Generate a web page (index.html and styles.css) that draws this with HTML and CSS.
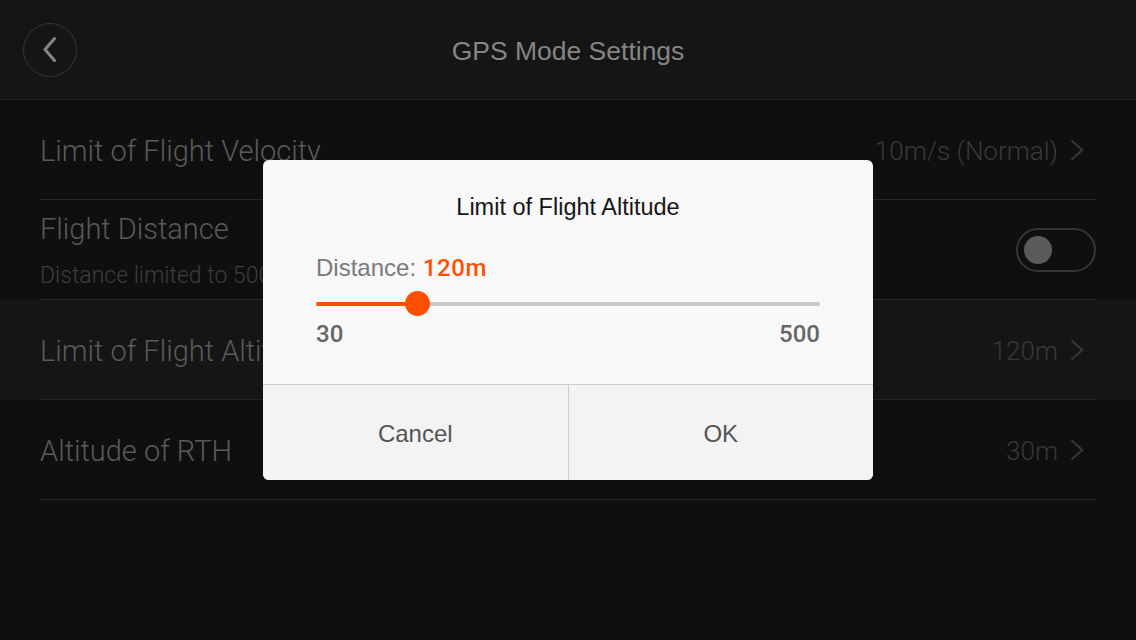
FILE: index.html
```html
<!DOCTYPE html>
<html lang="en">

<head>
    <meta charset="UTF-8">
    <meta name="viewport" content="width=device-width, initial-scale=1.0">
    <title>GPS Mode Settings</title>

    <link rel="stylesheet" href="styles.css">
</head>

<body>
    <div class="screen">
        <div class="topbar">
            <div class="back-btn">
                <svg width="54" height="54" viewBox="0 0 54 54">
                    <circle cx="27" cy="27" r="26.5" fill="none" stroke="#363636" stroke-width="1"/>
                    <path d="M31.5 15.5 L22 26.5 L31.5 37.5" fill="none" stroke="#858585" stroke-width="3" stroke-linecap="round" stroke-linejoin="round"/>
                </svg>
            </div>
            <div class="topbar-title">GPS Mode Settings</div>
            <div></div>
        </div>

        <div class="list">
            <div class="row">
                <div class="row-inner">
                    <div class="label">Limit of Flight Velocity</div>
                    <div class="value">10m/s (Normal)
                        <svg class="chev" width="14" height="22" viewBox="0 0 14 22"><path d="M1.5 1.5 L12.5 11 L1.5 20.5" fill="none" stroke="#393939" stroke-width="2"/></svg>
                    </div>
                </div>
            </div>
            <div class="row">
                <div class="row-inner">
                    <div class="label-group">
                        <div class="label">Flight Distance</div>
                        <div class="sublabel">Distance limited to 500m</div>
                    </div>
                    <div class="toggle"><div class="knob"></div></div>
                </div>
            </div>
            <div class="row active">
                <div class="row-inner">
                    <div class="label">Limit of Flight Altitude</div>
                    <div class="value">120m
                        <svg class="chev" width="14" height="22" viewBox="0 0 14 22"><path d="M1.5 1.5 L12.5 11 L1.5 20.5" fill="none" stroke="#393939" stroke-width="2"/></svg>
                    </div>
                </div>
            </div>
            <div class="row">
                <div class="row-inner">
                    <div class="label">Altitude of RTH</div>
                    <div class="value">30m
                        <svg class="chev" width="14" height="22" viewBox="0 0 14 22"><path d="M1.5 1.5 L12.5 11 L1.5 20.5" fill="none" stroke="#393939" stroke-width="2"/></svg>
                    </div>
                </div>
            </div>
        </div>

        <!-- altitude dialog -->
        <div class="dialog">
            <div class="dialog-body">
                <div class="dialog-title">Limit of Flight Altitude</div>
                <div class="readout">Distance: <span class="readout-val">120m</span></div>
                <div class="slider">
                    <div class="track"></div>
                    <div class="fill" style="width: 101px"></div>
                    <div class="thumb" style="left: 101px"></div>
                </div>
                <div class="range">
                    <span>30</span>
                    <span>500</span>
                </div>
            </div>
            <div class="dialog-buttons">
                <div class="dbtn">Cancel</div>
                <div class="dbtn">OK</div>
            </div>
        </div>
    </div>
</body>

</html>
```

FILE: styles.css
```css
body {
    margin: 0;
    background-color: #0f0f0f;
    font-family: Roboto, "Liberation Sans", sans-serif;
}

.screen {
    position: relative;
    width: 1136px;
    height: 640px;
    overflow: hidden;
}

.topbar {
    display: grid;
    grid-template-columns: 1fr auto 1fr;
    align-items: center;
    height: 99px;
    border-bottom: 1px solid #262626;
    background-color: #151515;
}

.back-btn {
    margin-left: 23px;
    width: 54px;
    height: 54px;
}

.back-btn svg {
    display: block;
}

.topbar-title {
    margin-top: 4px;
    color: #858585;
    font-family: "Liberation Sans", sans-serif;
    font-size: 26.5px;
}

.row {
    height: 100px;
}

.row.active {
    background-color: #151515;
}

.row-inner {
    margin: 0 40px;
    height: 100px;
    box-sizing: border-box;
    border-bottom: 1px solid #262626;
    display: flex;
    align-items: center;
    justify-content: space-between;
}

.label {
    padding-top: 2px;
    color: #5a5a5a;
    font-size: 29px;
    font-weight: 300;
}

.label-group {
    display: flex;
    flex-direction: column;
    gap: 16px;
    margin-top: 2px;
}

.label-group .label {
    padding-top: 0;
}

.sublabel {
    color: #3d3d3d;
    font-size: 23px;
    font-weight: 300;
}

.value {
    display: flex;
    align-items: center;
    padding-top: 2px;
    color: #393939;
    font-size: 26px;
    font-weight: 300;
    margin-right: 12px;
}

.chev {
    display: block;
    margin-left: 12px;
    margin-top: -2px;
}

.toggle {
    position: relative;
    width: 80px;
    height: 44px;
    box-sizing: border-box;
    border: 2px solid #363636;
    border-radius: 22px;
}

.knob {
    position: absolute;
    left: 6px;
    top: 6px;
    width: 28px;
    height: 28px;
    border-radius: 50%;
    background-color: #5a5a5a;
}

/* dialog sits over the list */
.dialog {
    position: absolute;
    left: 263px;
    top: 160px;
    width: 610px;
    height: 320px;
    border-radius: 6px;
    overflow: hidden;
    background-color: #f8f8f8;
    display: flex;
    flex-direction: column;
}

.dialog-body {
    height: 225px;
    box-sizing: border-box;
    padding: 32px 53px 0;
    border-bottom: 1px solid #cccccc;
    font-family: "Liberation Sans", sans-serif;
}

.dialog-title {
    text-align: center;
    color: #161616;
    font-size: 23.5px;
    line-height: 30px;
}

.readout {
    margin-top: 31px;
    color: #7a7a7a;
    font-size: 24px;
    line-height: 30px;
}

.readout-val {
    color: #ff5000;
    font-family: Roboto, sans-serif;
    font-weight: 500;
    font-size: 24px;
    letter-spacing: 0.6px;
}

.slider {
    position: relative;
    margin-top: 9px;
    height: 24px;
}

.track {
    position: absolute;
    left: 0;
    right: 0;
    top: 10px;
    height: 4px;
    border-radius: 2px;
    background-color: #c8c8c8;
}

.fill {
    position: absolute;
    left: 0;
    top: 10px;
    height: 4px;
    border-radius: 2px;
    background-color: #ff5000;
}

.thumb {
    position: absolute;
    top: -1px;
    width: 25px;
    height: 25px;
    margin-left: -12px;
    border-radius: 50%;
    background-color: #ff5000;
}

.range {
    display: flex;
    justify-content: space-between;
    margin-top: 5px;
    color: #666666;
    font-family: Roboto, sans-serif;
    font-size: 24px;
    font-weight: 500;
    line-height: 26px;
}

.dialog-buttons {
    flex: 1;
    display: flex;
    background-color: #f3f3f3;
}

.dbtn {
    flex: 1;
    display: flex;
    align-items: center;
    justify-content: center;
    padding-top: 3px;
    color: #555555;
    font-family: "Liberation Sans", sans-serif;
    font-size: 24px;
}

.dbtn + .dbtn {
    border-left: 1px solid #cccccc;
}
```
